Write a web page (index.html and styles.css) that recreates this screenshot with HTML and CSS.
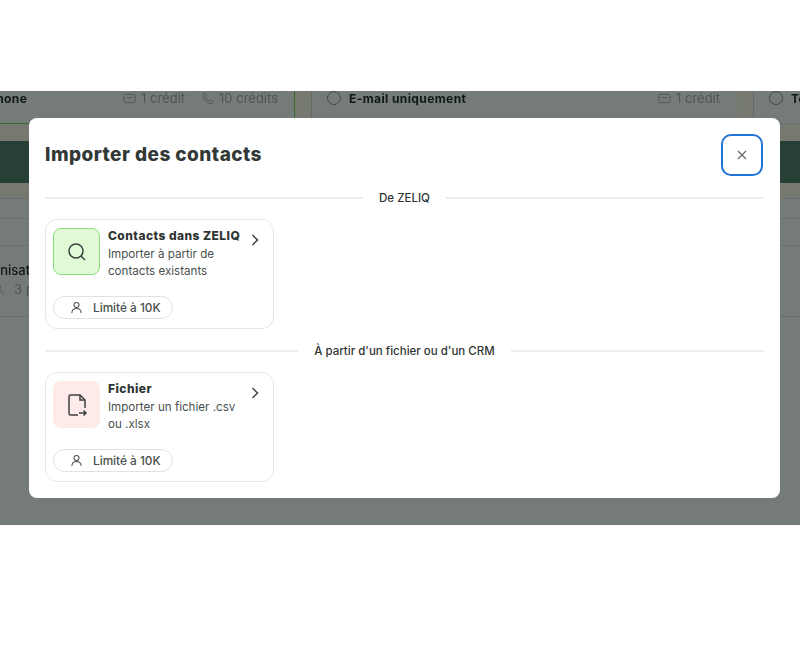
FILE: index.html
```html
<!DOCTYPE html>
<html lang="fr">
<head>
  <meta charset="UTF-8" />
  <meta name="viewport" content="width=device-width, initial-scale=1.0"/>
  <title>Importer des contacts</title>
  <link rel="stylesheet" href="styles.css">
</head>
<body>

  <div class="screen">
    <!-- page behind the modal -->
    <div class="backdrop-page">
      <div class="options">
        <div class="option option-first">
          <span class="option-name">Téléphone</span>
          <span class="option-costs">
            <span class="cost">
              <svg class="cost-icon" viewBox="0 0 14 14"><rect x="1" y="2.5" width="12" height="9" rx="1.5"/><path d="M4 5.5c1.5 1.2 4.5 1.2 6 0"/></svg>
              1 crédit
            </span>
            <span class="cost">
              <svg class="cost-icon" viewBox="0 0 14 14"><path d="M2 2.5 4.5 1.500 6 4.500 4.800 5.800C5.500 7.500 6.800 8.800 8.500 9.500L9.800 8.300 12.800 10 11.800 12.500C6.500 12.800 1.500 7.800 2 2.500Z"/></svg>
              10 crédits
            </span>
          </span>
        </div>
        <div class="option-gap"></div>
        <div class="option option-second">
          <span class="radio"></span>
          <span class="option-name">E-mail uniquement</span>
          <span class="option-costs">
            <span class="cost">
              <svg class="cost-icon" viewBox="0 0 14 14"><rect x="1" y="2.5" width="12" height="9" rx="1.5"/><path d="M4 5.5c1.5 1.2 4.500 1.2 6 0"/></svg>
              1 crédit
            </span>
          </span>
        </div>
        <div class="option-gap"></div>
        <div class="option option-third">
          <span class="radio"></span>
          <span class="option-name">Tous</span>
        </div>
      </div>
      <div class="band"></div>
      <div class="dark-bar"></div>
      <div class="band band-low"></div>
      <div class="table-row row-head"></div>
      <div class="table-row row-sub"></div>
      <div class="table-row row-main">
        <span class="row-title">Organisation</span>
        <span class="row-meta">
          <svg class="meta-icon" viewBox="0 0 14 14"><circle cx="7" cy="4.500" r="2.500"/><path d="M2 12.500c.5-6 9.500-6 10 0"/></svg>
          3 personnes
        </span>
      </div>
    </div>

    <div class="overlay">
      <div class="modal">
        <div class="modal-head">
          <h2>Importer des contacts</h2>
          <button class="close-btn">
            <svg viewBox="0 0 12 12"><path d="M2 2l8 8M10 2l-8 8"/></svg>
          </button>
        </div>

        <div class="divider"><span>De ZELIQ</span></div>

        <div class="import-card">
          <div class="card-top">
            <div class="card-icon icon-green">
              <svg viewBox="0 0 24 24"><circle cx="11" cy="11" r="7"/><path d="M16.200 16.200 20 20"/></svg>
            </div>
            <div class="card-text">
              <div class="card-title">Contacts dans ZELIQ</div>
              <div class="card-desc">Importer à partir de contacts existants</div>
            </div>
            <svg class="chevron" viewBox="0 0 12 12"><path d="M3.500 1 8.500 6 3.500 11"/></svg>
          </div>
          <div class="limit">
            <svg viewBox="0 0 14 14"><circle cx="7" cy="4.200" r="2.700"/><path d="M2 13c.3-6.500 9.700-6.500 10 0"/></svg>
            Limité à 10K
          </div>
        </div>

        <div class="divider"><span>À partir d'un fichier ou d'un CRM</span></div>

        <div class="import-card">
          <div class="card-top">
            <div class="card-icon icon-red">
              <svg viewBox="0 0 24 24"><path d="M13 22H5.500A1.500 1.500 0 0 1 4 20.500V3.500A1.500 1.500 0 0 1 5.500 2H15l5 5v8"/><path d="M15 2v5h5"/><path d="M14 20h7M18.500 17.500 21 20l-2.500 2.500"/></svg>
            </div>
            <div class="card-text">
              <div class="card-title">Fichier</div>
              <div class="card-desc">Importer un fichier .csv ou .xlsx</div>
            </div>
            <svg class="chevron" viewBox="0 0 12 12"><path d="M3.500 1 8.500 6 3.500 11"/></svg>
          </div>
          <div class="limit">
            <svg viewBox="0 0 14 14"><circle cx="7" cy="4.200" r="2.700"/><path d="M2 13c.3-6.500 9.700-6.500 10 0"/></svg>
            Limité à 10K
          </div>
        </div>
      </div>
    </div>
  </div>

</body>
</html>
```

FILE: styles.css
```css
body {
  margin: 0;
  background: #fff;
  font-family: Inter, 'Liberation Sans', sans-serif;
  color: #2f3533;
}

.screen {
  position: relative;
  margin-top: 91px;
  height: 434px;
  overflow: hidden;
}

.backdrop-page {
  height: 100%;
  background: #fff;
  filter: blur(0.5px);
}

.options {
  display: flex;
  height: 33px;
  font-size: 13px;
}

.option {
  display: flex;
  gap: 8px;
  align-items: center;
  box-sizing: border-box;
  border-bottom: 1px solid #6fd94f;
  align-self: flex-start;
  height: 33px;
  padding-bottom: 18px;
}

.option-first {
  margin-left: -38px;
  width: 333px;
  flex: none;
  border-right: 1px solid #6fd94f;
  padding-right: 16px;
}

.option-second {
  width: 426px;
  flex: none;
  padding-left: 15px;
  padding-right: 17px;
  border-left: 1px solid #d8d8d8;
  border-bottom-color: #e4e4e4;
}

.option-third {
  flex: none;
  width: 100px;
  padding-left: 15px;
  border-left: 1px solid #d8d8d8;
  border-bottom-color: #e4e4e4;
}

.option-gap {
  width: 16px;
  height: 27px;
  flex: none;
  background: #fffbee;
}

.option-name {
  font-weight: 700;
  font-size: 12px;
  letter-spacing: 0.4px;
  color: #1d2421;
}

.option-costs {
  display: flex;
  gap: 16px;
  margin-left: auto;
  color: #a9adab;
}

.cost {
  display: flex;
  align-items: center;
  gap: 5px;
}

.cost-icon, .meta-icon {
  width: 13px;
  height: 13px;
  fill: none;
  stroke: #a9adab;
  stroke-width: 1;
}

.radio {
  width: 12px;
  height: 12px;
  border: 1px solid #8d9290;
  border-radius: 50%;
}

.band {
  height: 17px;
  background: #fffbee;
}

.band-low {
  height: 15px;
}

.dark-bar {
  height: 42px;
  background: #517c6b;
}

.table-row {
  border-top: 1px solid #e4e4e4;
  box-sizing: border-box;
}

.row-head { height: 20px; }
.row-sub { height: 27px; }

.row-main {
  height: 72px;
  border-bottom: 1px solid #e4e4e4;
  padding: 16px 0 0;
  margin-left: -30px;
  display: flex;
  flex-direction: column;
  gap: 3px;
}

.row-title {
  font-size: 13px;
  font-weight: 500;
  color: #1d2421;
}

.row-meta {
  display: flex;
  align-items: center;
  gap: 9px;
  padding-left: 22px;
  font-size: 13px;
  color: #a9adab;
}

.overlay {
  position: absolute;
  inset: 0;
  background: rgba(4, 14, 10, 0.55);
  padding: 27px 20px 0 29px;
}

.modal {
  background: #fff;
  border-radius: 8px;
  height: 380px;
  box-sizing: border-box;
  padding: 16px;
}

.modal-head {
  display: flex;
  justify-content: space-between;
  align-items: center;
  height: 42px;
}

h2 {
  margin: 0 0 2px;
  font-size: 19px;
  font-weight: 800;
  letter-spacing: 0.45px;
  color: #323836;
}

.close-btn {
  width: 42px;
  height: 42px;
  margin-right: 1px;
  border: 2px solid #1f74d6;
  border-radius: 10px;
  background: none;
  padding: 0;
  display: flex;
  align-items: center;
  justify-content: center;
}

.close-btn svg {
  width: 12px;
  height: 12px;
  fill: none;
  stroke: #666b69;
  stroke-width: 1.200;
}

.divider {
  display: flex;
  align-items: center;
  gap: 16px;
  height: 16px;
  margin-top: 14px;
  font-size: 11.500px;
  font-weight: 500;
  color: #2f3533;
}

.divider::before, .divider::after {
  content: "";
  flex: 1;
  height: 2px;
  background: #eceeee;
}

.divider + .import-card {
  margin-top: 13px;
}

.import-card + .divider {
  margin-top: 14px;
}

.import-card {
  width: 229px;
  height: 110px;
  box-sizing: border-box;
  border: 1px solid #e6e8e8;
  border-radius: 12px;
  padding: 8px 7px 9px;
  display: flex;
  flex-direction: column;
  justify-content: space-between;
}

.card-top {
  display: flex;
  gap: 8px;
}

.card-icon {
  width: 47px;
  height: 47px;
  box-sizing: border-box;
  border-radius: 8px;
  flex: none;
  display: flex;
  align-items: center;
  justify-content: center;
}

.card-icon svg {
  width: 24px;
  height: 24px;
  fill: none;
  stroke: #3c4240;
  stroke-width: 1.500;
}

.icon-green {
  background: #e0fad6;
  border: 1.500px solid #8fdc7c;
}

.icon-red {
  background: #ffeaea;
}

.card-text {
  flex: 1;
  min-width: 0;
}

.card-title {
  font-size: 12px;
  font-weight: 800;
  line-height: 16px;
  letter-spacing: 0.45px;
  color: #2f3533;
}

.card-desc {
  font-size: 11.600px;
  line-height: 17px;
  margin-top: 2px;
  color: #4a504e;
}

.chevron {
  width: 12px;
  height: 12px;
  flex: none;
  margin: 6px 5px 0 0;
  fill: none;
  stroke: #3c4240;
  stroke-width: 1.500;
}

.limit {
  width: 120px;
  height: 23px;
  box-sizing: border-box;
  border: 1px solid #dfe2e2;
  border-radius: 12px;
  display: flex;
  align-items: center;
  gap: 10px;
  padding-left: 16px;
  font-size: 11.800px;
  font-weight: 500;
  color: #4a504e;
}

.limit svg {
  width: 13px;
  height: 13px;
  fill: none;
  stroke: #4a504e;
  stroke-width: 1.100;
}
```
